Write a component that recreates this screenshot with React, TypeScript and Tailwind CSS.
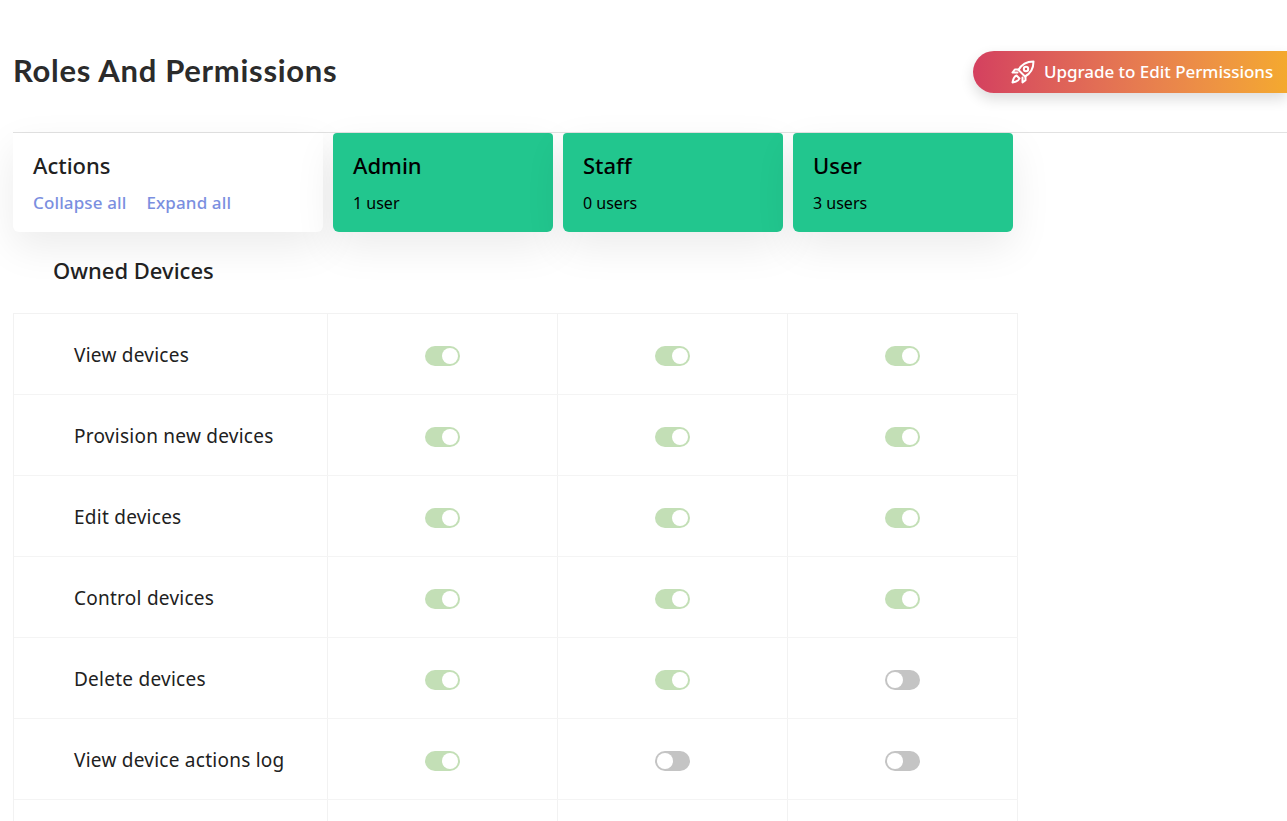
const roles = [
  { name: 'Admin', users: '1 user' },
  { name: 'Staff', users: '0 users' },
  { name: 'User', users: '3 users' },
];

const permissions: { label: string; values: boolean[] }[] = [
  { label: 'View devices', values: [true, true, true] },
  { label: 'Provision new devices', values: [true, true, true] },
  { label: 'Edit devices', values: [true, true, true] },
  { label: 'Control devices', values: [true, true, true] },
  { label: 'Delete devices', values: [true, true, false] },
  { label: 'View device actions log', values: [true, false, false] },
];

function RocketIcon() {
  return (
    <svg
      viewBox="0 0 24 24"
      fill="none"
      stroke="currentColor"
      strokeWidth={2}
      strokeLinejoin="round"
      strokeLinecap="round"
      className="mr-[9px] h-6 w-6"
    >
      <path d="M22.5 1.5C16 1.5 10.5 4.5 7.5 10L14 16.5C19.5 13.5 22.5 8 22.5 1.5Z" />
      <circle cx="15" cy="9" r="2.2" />
      <path d="M8 9.5H3.8L1.5 12.5H6.5" />
      <path d="M14.5 16V20.2L11.5 22.5V17.5" />
      <path d="M5.5 15.5C3 16.5 2 19.5 1.5 22.5C4.5 22 7.5 21 8.5 18.5Z" />
    </svg>
  );
}

function Toggle({ on }: { on: boolean }) {
  return (
    <span
      className={`flex h-5 w-[35px] items-center rounded-full px-[2px] ${
        on ? 'justify-end bg-[#c3dfb6]' : 'justify-start bg-[#c4c4c4]'
      }`}
    >
      <span className="h-4 w-4 rounded-full bg-white" />
    </span>
  );
}

export default function App() {
  return (
    <div className="h-[821px] w-full overflow-hidden bg-white font-['Noto_Sans','Open_Sans',sans-serif] text-[#212121]">
      {/* Title bar */}
      <div className="ml-[13px] flex h-[133px] items-start justify-between border-b border-[#e2e2e2] pt-[51px]">
        <h1 className="font-['Lato',sans-serif] text-[31px] leading-[38px] font-bold tracking-[0.7px] text-[#2b2b2b]">
          Roles And Permissions
        </h1>
        <button className="flex h-[42px] w-[314px] items-center rounded-l-full bg-gradient-to-r from-[#d4405f] to-[#f4a92e] pl-[38px] text-[17px] font-medium tracking-[-0.04px] text-white shadow-[0_6px_14px_rgba(0,0,0,0.14)]">
          <RocketIcon />
          Upgrade to Edit Permissions
        </button>
      </div>

      {/* Role headers */}
      <div className="ml-[13px] flex gap-[10px]">
        <div className="h-[99px] w-[310px] rounded-b-md bg-white pt-[19px] pl-5 shadow-[0_15px_40px_rgba(0,0,0,0.08)]">
          <div className="text-[22px] leading-[27px] font-medium">Actions</div>
          <div className="mt-[14px] flex gap-5 text-[17px] leading-[20px] font-medium tracking-[0.12px] text-[#7b8fe0]">
            <span>Collapse all</span>
            <span>Expand all</span>
          </div>
        </div>
        {roles.map((role) => (
          <div
            key={role.name}
            className="h-[99px] w-[220px] rounded-b-md rounded-t-[4px] bg-[#22c68e] pt-[19px] pl-5 text-black shadow-[0_15px_40px_rgba(0,0,0,0.08)]"
          >
            <div className="text-[22px] leading-[27px] font-medium">{role.name}</div>
            <div className="mt-[14px] text-[16px] leading-[20px]">{role.users}</div>
          </div>
        ))}
      </div>

      {/* Section */}
      <h2 className="mt-[25px] ml-[53px] text-[22px] leading-[26px] font-medium">Owned Devices</h2>

      <div className="mt-[30px] ml-[13px] w-[1005px] border-t border-l border-[#f2f2f2]">
        {permissions.map((row) => (
          <div key={row.label} className="flex h-[81px] border-b border-[#f4f4f4]">
            <div className="flex w-[314px] items-center border-r border-[#f2f2f2] pt-[2px] pl-[60px] text-[19px] tracking-[0.25px]">
              {row.label}
            </div>
            {row.values.map((value, index) => (
              <div key={index} className="flex w-[230px] items-center justify-center border-r border-[#f2f2f2] pt-[3px]">
                <Toggle on={value} />
              </div>
            ))}
          </div>
        ))}
        {/* next row is cut off by the fold */}
        <div className="flex h-[81px]">
          <div className="w-[314px] border-r border-[#f2f2f2]" />
          <div className="w-[230px] border-r border-[#f2f2f2]" />
          <div className="w-[230px] border-r border-[#f2f2f2]" />
          <div className="w-[230px] border-r border-[#f2f2f2]" />
        </div>
      </div>
    </div>
  );
}
